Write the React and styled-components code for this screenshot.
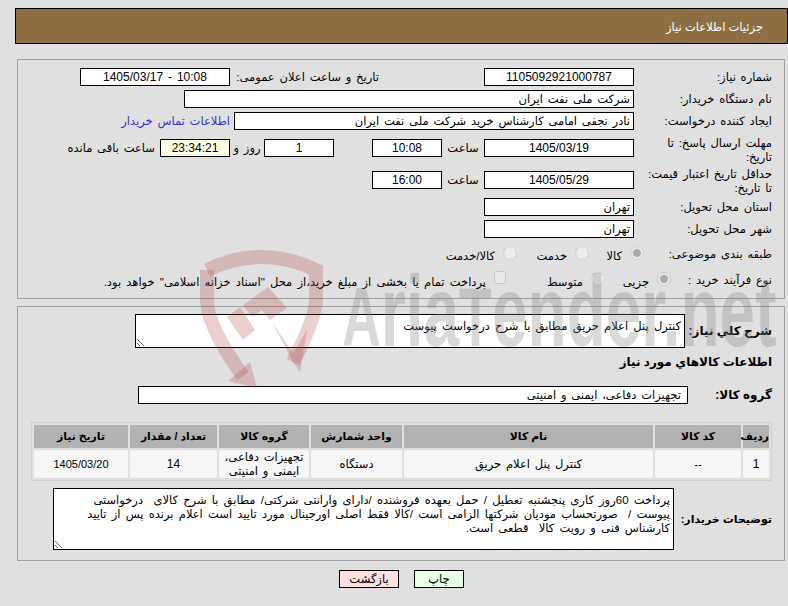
import styled, { createGlobalStyle } from 'styled-components'

const FONT = '"Liberation Sans", "DejaVu Sans", sans-serif'

const GlobalStyle = createGlobalStyle`
html, body {
  margin: 0;
  padding: 0;
  background: #e0e0e0;
}
body {
  font-family: ${FONT};
  font-size: 11.5px;
  word-spacing: 1.6px;
  color: #000;
}
`

const Page = styled.div`
position: relative;
width: 788px;
height: 606px;
overflow: hidden;
direction: rtl;
padding-top: 8px;
padding-left: 15px;
box-sizing: border-box;
`

const Header = styled.div`
height: 36px;
box-sizing: border-box;
border: 1px solid #000;
background: #8e6f43;
color: #fff;
line-height: 36px;
padding-right: 24px;
word-spacing: 0;
`

const Panel = styled.div`
margin: ${({$top})=>$top}px 3px 0 2px;
padding: ${({$pad})=>$pad}px 12px 0 0;
border: 1px solid #a0a0a0;
box-sizing: border-box;
height: ${({$height})=>$height}px;
`

const Row = styled.div`
display: flex;
align-items: center;
height: ${({$height})=>$height || 22}px;
margin-top: ${({$top})=>$top || 0}px;
`

const Label = styled.div`
flex: none;
width: ${({$width})=>$width || 138}px;
line-height: 14px;
padding-top: ${({$nudge})=>$nudge || 0}px;
box-sizing: border-box;
white-space: nowrap;
`

const BoldLabel = styled(Label)`
font-weight: bold;
font-size: ${({$size})=>$size || 12}px;
word-spacing: 0;
`

const Field = styled.div`
flex: none;
box-sizing: border-box;
height: 18px;
width: ${({$width})=>$width}px;
border: 1px solid #000;
background: ${({$bg})=>$bg || '#fff'};
line-height: 16px;
padding: 0 ${({$indent})=>$indent || 3}px 0 3px;
text-align: ${({$center})=>$center ? 'center' : 'right'};
font-size: ${({$center})=>$center ? '12px' : '11.5px'};
`

const Unit = styled.div`
flex: none;
width: ${({$width})=>$width}px;
text-align: center;
`

const Gap = styled.div`
flex: none;
width: ${({$width})=>$width}px;
`

const ContactLink = styled.a`
margin-right: 4px;
color: #3333cc;
text-decoration: none;
`

const Option = styled.label`
flex: none;
display: flex;
align-items: center;
gap: 8px;
width: ${({$width})=>$width ? `${$width}px` : 'auto'};
`

const OptionText = styled.span`
position: relative;
top: 2px;
word-spacing: 2px;
`

const Radio = styled.input.attrs({ type: 'radio', disabled: true })`
appearance: none;
flex: none;
position: relative;
top: -1px;
margin: 0;
width: 14px;
height: 14px;
border-radius: 50%;
border: 1px solid #d2d2d2;
background: ${({ checked }) => checked
    ? 'radial-gradient(circle, #ababab 0 3.5px, #e8e8e8 4.5px)'
    : '#ececec'};
`

const Check = styled.input.attrs({ type: 'checkbox', disabled: true })`
appearance: none;
flex: none;
position: relative;
top: -3px;
margin: 0;
width: 12px;
height: 13px;
border-radius: 2px;
border: 1px solid #c8c8c8;
background: #e8e8e8;
`

const Note = styled.textarea.attrs({ readOnly: true })`
flex: none;
display: block;
box-sizing: border-box;
margin: 0;
width: ${({$width})=>$width}px;
height: ${({$height})=>$height}px;
padding: 4px 3px 0;
border: 1px solid #000;
border-radius: 0;
outline: none;
background: #fff;
color: #000;
direction: rtl;
font-family: ${FONT};
font-size: 11.5px;
word-spacing: 2px;
line-height: 14px;
overflow: hidden;
white-space: pre;
`

const Heading = styled.div`
margin-top: 7px;
height: 14px;
line-height: 14px;
font-weight: bold;
font-size: 12px;
word-spacing: 0;
`

const ItemsTable = styled.table`
table-layout: fixed;
width: 741px;
margin: 18px 0 7px;
border: 1px solid #cfcfcf;
border-spacing: 2px;
`

const HeadCell = styled.th`
height: 23px;
padding: 0;
background: #b2b2b2;
font-size: 10.8px;
font-weight: bold;
word-spacing: 0;
white-space: nowrap;
`

const Cell = styled.td`
height: 28px;
padding: 0;
background: #f6f6f6;
text-align: center;
line-height: 14px;
font-size: ${({$size})=>$size || 11.5}px;
`

const Buttons = styled.div`
display: flex;
justify-content: center;
gap: 15px;
margin-top: 9px;
`

const Button = styled.button`
box-sizing: border-box;
width: ${({$width})=>$width}px;
height: 18px;
padding: 0;
border: 1px solid #000;
border-radius: 0;
background: ${({$bg})=>$bg};
color: #000;
font-family: ${FONT};
font-size: 11.5px;
`

/* faded site logo that sits over the whole form */
const Watermark = styled.div`
position: absolute;
left: 0;
top: 0;
width: 788px;
height: 606px;
pointer-events: none;
direction: ltr;
`

const Shield = styled.svg`
position: absolute;
left: 0;
top: 0;
`

const WatermarkText = styled.div`
position: absolute;
left: 342px;
top: 252px;
height: 100px;
line-height: 118px;
white-space: nowrap;
font-family: "Liberation Sans", sans-serif;
font-weight: bold;
font-size: 100px;
word-spacing: 0;
color: rgba(128, 128, 128, 0.3);
transform: scaleX(0.64);
transform-origin: left top;
`

const Cap = styled.span`
font-size: 84px;
`

const columns = [26, 86, 249, 91, 90, 87, 94]
const titles = ['ردیف', 'کد کالا', 'نام کالا', 'واحد شمارش', 'گروه کالا', 'تعداد / مقدار', 'تاریخ نیاز']

const description = `پرداخت 60روز کاری پنجشنبه تعطیل / حمل بعهده فروشنده /دارای وارانتی شرکتی/ مطابق با شرح کالای  درخواستی
پیوست /  صورتحساب مودیان شرکتها الزامی است /کالا فقط اصلی اورجینال مورد تایید است اعلام برنده پس از تایید
کارشناس فنی و رویت کالا  قطعی است.`

export default function App() {
  return (
    <>
      <GlobalStyle />
      <Page>
        <Header>جزئیات اطلاعات نیاز</Header>

        <Panel $top={15} $height={240} $pad={6}>
          <Row>
            <Label>شماره نیاز:</Label>
            <Field $width={150} $center>1105092921000787</Field>
            <Gap $width={105} />
            <Label $width={149}>تاریخ و ساعت اعلان عمومی:</Label>
            <Field $width={150} $center dir="ltr">1405/03/17 - 10:08</Field>
          </Row>
          <Row>
            <Label>نام دستگاه خریدار:</Label>
            <Field $width={450}>شرکت ملی نفت ایران</Field>
          </Row>
          <Row>
            <Label>ایجاد کننده درخواست:</Label>
            <Field $width={400}>نادر نجفی امامی کارشناس خرید شرکت ملی نفت ایران</Field>
            <ContactLink href="#">اطلاعات تماس خریدار</ContactLink>
          </Row>
          <Row $height={32}>
            <Label $nudge={4}>مهلت ارسال پاسخ: تا<br />تاریخ:</Label>
            <Field $width={150} $center>1405/03/19</Field>
            <Unit $width={42}>ساعت</Unit>
            <Field $width={70} $center>10:08</Field>
            <Gap $width={38} />
            <Field $width={70} $center>1</Field>
            <Unit $width={34}>روز و</Unit>
            <Field $width={70} $center $bg="#ffffe6">23:34:21</Field>
            <Gap $width={5} />
            <span>ساعت باقی مانده</span>
          </Row>
          <Row $height={32}>
            <Label $nudge={2}>حداقل تاریخ اعتبار قیمت:<br />تا تاریخ:</Label>
            <Field $width={150} $center>1405/05/29</Field>
            <Unit $width={42}>ساعت</Unit>
            <Field $width={70} $center>16:00</Field>
          </Row>
          <Row>
            <Label>استان محل تحویل:</Label>
            <Field $width={150}>تهران</Field>
          </Row>
          <Row>
            <Label>شهر محل تحویل:</Label>
            <Field $width={150}>تهران</Field>
          </Row>
          <Row $height={28}>
            <Label $width={128}>طبقه بندی موضوعی:</Label>
            <Option $width={55}><Radio checked readOnly /><OptionText>کالا</OptionText></Option>
            <Option $width={72}><Radio /><OptionText>خدمت</OptionText></Option>
            <Option><Radio /><OptionText>کالا/خدمت</OptionText></Option>
          </Row>
          <Row $height={24}>
            <Label $width={101}>نوع فرآیند خرید :</Label>
            <Option $width={66}><Radio checked readOnly /><OptionText>جزیی</OptionText></Option>
            <Option $width={99}><Radio /><OptionText>متوسط</OptionText></Option>
            <Option><Check /><OptionText>پرداخت تمام یا بخشی از مبلغ خرید،از محل "اسناد خزانه اسلامی" خواهد بود.</OptionText></Option>
          </Row>
        </Panel>

        <Panel $top={7} $height={255} $pad={7}>
          <Row $height={34}>
            <BoldLabel $width={87}>شرح کلي نیاز:</BoldLabel>
            <Note $width={550} $height={34} defaultValue="کنترل پنل اعلام حریق مطابق با شرح درخواست پیوست" />
          </Row>
          <Heading>اطلاعات کالاهاي مورد نیاز</Heading>
          <Row $height={18} $top={17}>
            <BoldLabel $width={84}>گروه کالا:</BoldLabel>
            <Field $width={550} $indent={6}>تجهیزات دفاعی، ایمنی و امنیتی</Field>
          </Row>
          <ItemsTable>
            <colgroup>
              {columns.map((width, i) => <col key={i} width={width} />)}
            </colgroup>
            <thead>
              <tr>
                {titles.map(title => <HeadCell key={title}>{title}</HeadCell>)}
              </tr>
            </thead>
            <tbody>
              <tr>
                <Cell $size={12}>1</Cell>
                <Cell>--</Cell>
                <Cell>کنترل پنل اعلام حریق</Cell>
                <Cell>دستگاه</Cell>
                <Cell>تجهیزات دفاعی، ایمنی و امنیتی</Cell>
                <Cell $size={12}>14</Cell>
                <Cell $size={11}>1405/03/20</Cell>
              </tr>
            </tbody>
          </ItemsTable>
          <Row $height={62}>
            <BoldLabel $width={98} $size={11}>توضیحات خریدار:</BoldLabel>
            <Note $width={621} $height={62} defaultValue={description} />
          </Row>
        </Panel>

        <Buttons>
          <Button $width={50} $bg="#e6ffe6">چاپ</Button>
          <Button $width={60} $bg="#ffdfdf">بازگشت</Button>
        </Buttons>

        <Watermark>
          <Shield width="788" height="606" viewBox="0 0 788 606">
            <g fill="none" stroke="rgba(174,52,52,0.23)" strokeWidth="14">
              <path d="M207 270 Q262 244 316 270 V298 Q316 318 293 362" />
              <path d="M207 270 V300 Q207 326 243 376" />
            </g>
            <g fill="rgba(174,52,52,0.23)">
              <polygon points="228,381 250,362 257,388" />
              <polygon points="227,317 240,307 255,330 243,340" />
              <polygon points="243,305 268,287 287,308 270,320 262,310 252,317" />
              <polygon points="272,322 293,353 307,330 300,372 293,362" />
            </g>
          </Shield>
          <WatermarkText><Cap>A</Cap>ria<Cap>T</Cap>ender.net</WatermarkText>
        </Watermark>
      </Page>
    </>
  )
}
